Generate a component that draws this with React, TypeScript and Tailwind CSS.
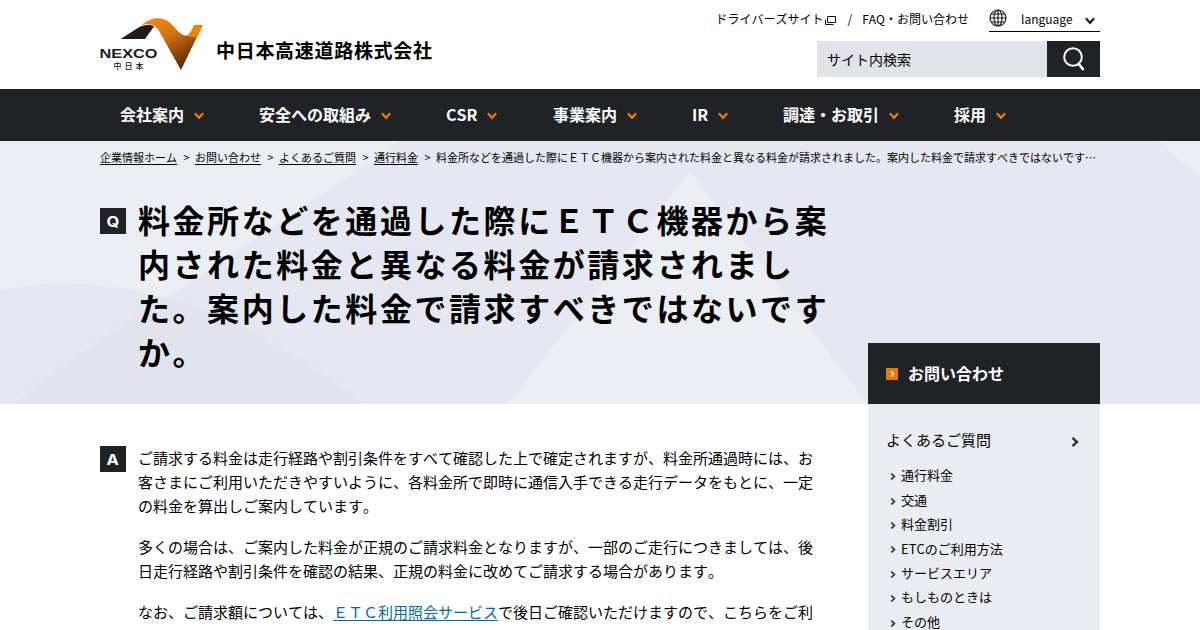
import { useId } from "react";

const NAV = [
  { label: "会社案内", width: "w-[139px]" },
  { label: "安全への取組み", width: "w-[187px]" },
  { label: "CSR", width: "w-[107px]" },
  { label: "事業案内", width: "w-[139px]" },
  { label: "IR", width: "w-[91px]" },
  { label: "調達・お取引", width: "w-[171px]" },
  { label: "採用", width: "w-[80px]" },
];

const CRUMBS = ["企業情報ホーム", "お問い合わせ", "よくあるご質問", "通行料金"];

const FAQ_LINKS = [
  "通行料金",
  "交通",
  "料金割引",
  "ETCのご利用方法",
  "サービスエリア",
  "もしものときは",
  "その他",
];

const TITLE =
  "料金所などを通過した際にＥＴＣ機器から案内された料金と異なる料金が請求されました。案内した料金で請求すべきではないですか。";

function ChevronDown({ className }: { className: string }) {
  return (
    <svg viewBox="0 0 10 8" className={className} fill="none" stroke="currentColor" strokeWidth="2.4">
      <path d="M0.8 1.2 5 5.8 9.2 1.2" />
    </svg>
  );
}

function ChevronRight({ className }: { className: string }) {
  return (
    <svg viewBox="0 0 8 10" className={className} fill="none" stroke="currentColor" strokeWidth="2.4">
      <path d="M1.5 0.8 6 5 1.5 9.2" />
    </svg>
  );
}

function Logo() {
  const id = useId();
  return (
    <svg viewBox="0 0 104 54" className="h-[54px] w-[104px] shrink-0">
      <defs>
        <linearGradient id={id} gradientUnits="userSpaceOnUse" x1="62" y1="4" x2="88" y2="50">
          <stop offset="0" stopColor="#ee8210" />
          <stop offset="0.35" stopColor="#c96f12" />
          <stop offset="0.7" stopColor="#8a4208" />
          <stop offset="1" stopColor="#5a2305" />
        </linearGradient>
      </defs>
      <path d="M20.7 22L37 11.5C42 8 49 7 54 9.5L45 22Z" fill="#231815" />
      <path
        d="M40 9C48 3 53 1.3 58 1.3C66 1.3 70 5.5 75 11C79 16 83 18.7 87 18.7H97.5L81 53L59 14C56 8.5 49 5 40 9Z"
        fill={`url(#${id})`}
      />
      <path d="M94 8H103L97.3 20C94 20.5 90 20 86 18.6C90 18 92 12 94 8Z" fill="#f08300" />
      <text
        x="-0.5"
        y="41"
        textLength="58"
        lengthAdjust="spacingAndGlyphs"
        className="font-['Liberation_Sans'] text-[12px] font-bold"
        fill="#231815"
      >
        NEXCO
      </text>
      <text x="13.5" y="51.5" textLength="30" className="font-['Noto_Sans_CJK_JP'] text-[8px] font-medium" fill="#231815">
        中日本
      </text>
    </svg>
  );
}

function Badge({ children }: { children: string }) {
  return (
    <span className="flex size-[26px] shrink-0 items-center justify-center bg-[#1f2326] font-['Inter'] text-[15px] leading-none font-bold text-white">
      <span className="scale-x-110">{children}</span>
    </span>
  );
}

function Header() {
  return (
    <header className="mx-auto flex h-[89px] w-[1000px] justify-between">
      <div className="flex pt-[17px]">
        <Logo />
        <p className="ml-[12px] pt-[19px] text-[19px] leading-[28px] font-bold tracking-[0.7px]">中日本高速道路株式会社</p>
      </div>
      <div className="flex flex-col items-end">
        <div className="flex h-[32px] text-[12px]">
          <a className="pt-[10px] leading-[18px]">ドライバーズサイト</a>
          <svg viewBox="0 0 12 10" className="mt-[15px] ml-[2px] h-[10px] w-[12px]" fill="none" stroke="#111">
            <path d="M2.5 1.5h8v6h-8zM0.500 4.500v5h8" />
          </svg>
          <span className="ml-[10px] pt-[10px] leading-[18px]">/</span>
          <a className="ml-[10px] pt-[10px] leading-[18px]">FAQ・お問い合わせ</a>
          <div className="ml-[20px] flex w-[111px] border-b border-black pt-[10px]">
            <svg viewBox="0 0 18 18" className="-mt-px size-[18px]" fill="none" stroke="#1f2326" strokeWidth="1.2">
              <circle cx="9" cy="9" r="8" />
              <ellipse cx="9" cy="9" rx="4" ry="8" />
              <path d="M9 1v16M1 9h16M2.2 5h13.6M2.2 13h13.6" />
            </svg>
            <span className="ml-[14px] leading-[18px]">language</span>
            <ChevronDown className="mt-[7px] ml-[12px] h-[8px] w-[10px] text-[#1f2326]" />
          </div>
        </div>
        <div className="mt-[9px] flex h-[36px] w-[283px]">
          <div className="flex-1 bg-[#e0e3e8] pl-[10px] text-[14px] leading-[37px]">サイト内検索</div>
          <button className="flex w-[53px] items-center justify-center bg-[#1f2326]">
            <svg viewBox="0 0 22 24" className="h-[24px] w-[22px]" fill="none" stroke="white" strokeWidth="2">
              <circle cx="10" cy="10" r="8.8" />
              <path d="m15 16 5.5 7" strokeWidth="2.6" />
            </svg>
          </button>
        </div>
      </div>
    </header>
  );
}

function HeroPattern() {
  return (
    <svg viewBox="0 0 1200 263" className="absolute inset-0 h-[263px] w-[1200px]">
      <path d="M0 0H400C320 55 230 115 165 157C100 138 40 140 0 149Z" fill="#ebeef3" />
      <path d="M165 157C230 173 310 220 365 263H14C60 225 110 190 165 157Z" fill="#e1e4ec" />
      <path d="M690 30L868 263H508Z" fill="#ebeef3" />
      <path d="M1158 0H1200V37Z" fill="#ebeef3" />
    </svg>
  );
}

function Sidebar() {
  return (
    <aside className="relative -mt-[61px] w-[232px] shrink-0">
      <div className="flex h-[61px] items-center bg-[#1f2326] pl-[18px] text-white">
        <span className="mt-px flex size-[12px] items-center justify-center bg-[#ee7800]">
          <ChevronRight className="h-[6px] w-[5px]" />
        </span>
        <span className="-mt-px ml-[10px] text-[16px] font-bold">お問い合わせ</span>
      </div>
      <div className="h-[226px] bg-[#eaedf2] pt-[24px] pr-[21px] pl-[18px]">
        <div className="flex items-center justify-between text-[15px] leading-[24px]">
          <span>よくあるご質問</span>
          <ChevronRight className="mt-[3px] h-[10px] w-[8px] text-[#333]" />
        </div>
        <ul className="mt-[11.4px] pl-[4px]">
          {FAQ_LINKS.map((label) => (
            <li key={label} className="flex items-center text-[13px] leading-[24.4px]">
              <ChevronRight className="mt-[2px] mr-[5px] h-[7px] w-[6px] text-[#333]" />
              {label}
            </li>
          ))}
        </ul>
      </div>
    </aside>
  );
}

export default function App() {
  return (
    <div className="h-[630px] w-[1200px] overflow-hidden bg-white font-['Noto_Sans_CJK_JP',sans-serif] text-black [font-kerning:none]">
      <Header />

      <nav className="h-[52px] bg-[#1f2326]">
        <div className="mx-auto flex h-[50px] w-[960px] text-[16px] font-bold text-white">
          {NAV.map(({ label, width }) => (
            <a key={label} className={`flex shrink-0 items-center whitespace-nowrap ${width}`}>
              {label}
              <ChevronDown className="mt-[3px] ml-[10px] h-[8px] w-[10px] text-[#ee7800]" />
            </a>
          ))}
        </div>
      </nav>

      {/* Question */}
      <section className="relative h-[263px] bg-[#e5e8f0]">
        <HeroPattern />
        <div className="relative mx-auto w-[1000px]">
          <div className="flex h-[60px] pt-[8px] text-[11px] leading-[17px] whitespace-nowrap">
            {CRUMBS.map((label) => (
              <span key={label} className="flex">
                <a className="underline underline-offset-2">{label}</a>
                <span className="w-[18px] pl-[6.5px]">&gt;</span>
              </span>
            ))}
            <span className="min-w-0 flex-1">
              料金所などを通過した際にＥＴＣ機器から案内された料金と異なる料金が請求されました。案内した料金で請求すべきではないです…
            </span>
          </div>
          <div className="flex">
            <div className="pt-[7px]">
              <Badge>Q</Badge>
            </div>
            <h1 className="-mt-[4px] ml-[12px] w-[692px] text-[32px] leading-[44px] font-bold tracking-[2.56px]">{TITLE}</h1>
          </div>
        </div>
      </section>

      {/* Answer */}
      <div className="mx-auto flex w-[1000px] justify-between">
        <section className="flex pt-[42px]">
          <Badge>A</Badge>
          <div className="ml-[12px] w-[676px] space-y-[17px] text-[15px] leading-[24px]">
            <p>
              ご請求する料金は走行経路や割引条件をすべて確認した上で確定されますが、料金所通過時には、お客さまにご利用いただきやすいように、各料金所で即時に通信入手できる走行データをもとに、一定の料金を算出しご案内しています。
            </p>
            <p>
              多くの場合は、ご案内した料金が正規のご請求料金となりますが、一部のご走行につきましては、後日走行経路や割引条件を確認の結果、正規の料金に改めてご請求する場合があります。
            </p>
            <p className="whitespace-nowrap">
              なお、ご請求額については、<a className="text-[#0068b7] underline underline-offset-2">ＥＴＣ利用照会サービス</a>で後日ご確認いただけますので、こちらをご利
            </p>
          </div>
        </section>
        <Sidebar />
      </div>
    </div>
  );
}
